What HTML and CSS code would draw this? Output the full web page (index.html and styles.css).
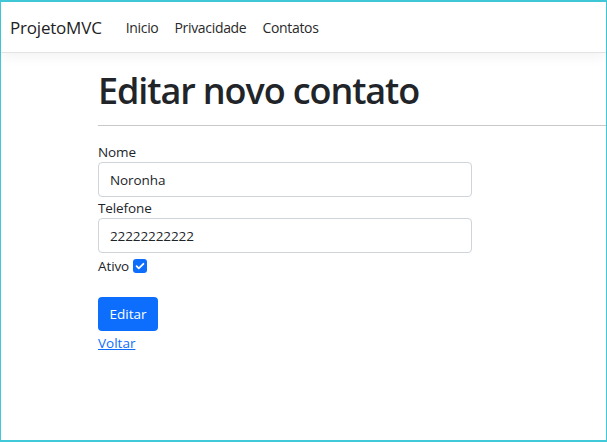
FILE: index.html
```html
<!DOCTYPE html>
<html lang="pt">
<head>
<meta charset="utf-8">
<title>Editar - ProjetoMVC</title>
<link rel="stylesheet" href="styles.css">
</head>
<body>
<div class="frame">
  <header class="navbar">
    <a class="brand" href="#">ProjetoMVC</a>
    <nav class="nav">
      <a class="nav-link" href="#">Inicio</a>
      <a class="nav-link" href="#">Privacidade</a>
      <a class="nav-link" href="#">Contatos</a>
    </nav>
  </header>
  <main class="container">
    <h1 class="title">Editar novo contato</h1>
    <hr class="rule">
    <form class="form">
      <label class="label" for="nome">Nome</label>
      <input class="input" id="nome" type="text" value="Noronha">
      <label class="label" for="tel">Telefone</label>
      <input class="input" id="tel" type="text" value="22222222222">
      <div class="check-row">
        <label class="label inline" for="ativo">Ativo</label>
        <span class="checkbox" id="ativo">
          <svg viewBox="0 0 14 14" width="14" height="14"><path d="M3.6 7.2l2.2 2.2 4.6-4.6" fill="none" stroke="#fff" stroke-width="1.8" stroke-linecap="round" stroke-linejoin="round"/></svg>
        </span>
      </div>
      <div class="actions">
        <button class="btn" type="button">Editar</button>
      </div>
    </form>
    <a class="back" href="#">Voltar</a>
  </main>
</div>
</body>
</html>
```
FILE: styles.css
```css
* { box-sizing: border-box; }
html, body { margin: 0; padding: 0; }
body {
  font-family: "Open Sans", "Noto Sans", sans-serif;
  color: #212529;
  background: #fff;
}
.frame {
  min-height: 100vh;
  border: 1px solid #3fc9d9;
  border-top-width: 2px;
  border-bottom-width: 2px;
}
.navbar {
  height: 51px;
  display: flex;
  align-items: center;
  padding: 0 0 0 9px;
  border-bottom: 1px solid #e3e3e3;
  box-shadow: 0 4px 12px rgba(0,0,0,.05);
  background: #fff;
}
.brand {
  font-size: 17px;
  color: #222;
  text-decoration: none;
  margin-right: 16px;
  letter-spacing: -0.2px;
}
.nav { display: flex; gap: 0; }
.nav-link {
  font-size: 14px;
  color: #2a2a2a;
  text-decoration: none;
  padding: 0 8px;
  letter-spacing: -0.32px;
}
.container {
  padding-left: 97px;
}
.title {
  margin: 16px 0 0;
  font-size: 36px;
  font-weight: 600;
  line-height: 44px;
  letter-spacing: -1.1px;
  color: #212529;
}
.rule {
  margin: 12px 0 17px;
  border: 0;
  border-top: 1px solid #c8c8c8;
  height: 0;
}
.form {
  display: flex;
  flex-direction: column;
  align-items: flex-start;
}
.label {
  font-size: 13.5px;
  line-height: 19px;
  color: #212529;
  letter-spacing: -0.1px;
}
.input {
  width: 374px;
  height: 35px;
  border: 1px solid #ced4da;
  border-radius: 4px;
  padding: 0 11px;
  font-family: inherit;
  font-size: 13.5px;
  color: #212529;
  margin-bottom: 2px;
  letter-spacing: -0.1px;
}
.check-row {
  display: flex;
  align-items: center;
  gap: 4px;
  height: 22px;
}
.checkbox {
  width: 14px;
  height: 14px;
  border-radius: 3px;
  background: #0d6efd;
  display: inline-flex;
}
.actions { margin-top: 20px; }
.btn {
  width: 60px;
  height: 34px;
  background: #0d6efd;
  color: #fff;
  border: 0;
  border-radius: 4px;
  font-family: inherit;
  font-size: 13.5px;
  padding: 0;
}
.back {
  display: inline-block;
  margin-top: 0;
  font-size: 13.5px;
  color: #0d6efd;
  text-decoration: underline;
}
```
